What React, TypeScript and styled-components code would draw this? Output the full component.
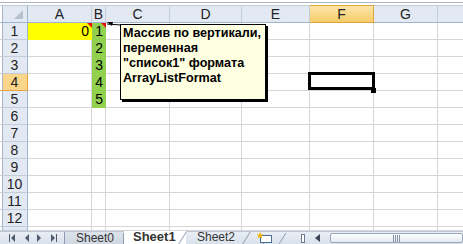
import styled, { createGlobalStyle, css } from 'styled-components';

// Estilo global
const GlobalStyle = createGlobalStyle`
  html, body {
    margin: 0;
    padding: 0;
    background: #fff;
    overflow: hidden;
  }
  body {
    font-family: "Liberation Sans", Arial, sans-serif;
  }
`;

const Page = styled.div`
  position: relative;
  width: 463px;
  height: 244px;
  overflow: hidden;
  display: flex;
  flex-direction: column;
  background: #fff;
`;

const TopStrip = styled.div`
  height: 5px;
  flex: none;
  background: linear-gradient(to bottom, #fff 2px, #aeb7c3 2px, #aeb7c3 3px, #fff 3px);
`;

const Sheet = styled.div`
  flex: none;
  display: grid;
  grid-template-columns: 28px 64px 14px 64px 72px 68px 64px 64px 64px;
  grid-template-rows: 18px repeat(12, 17px) 4px;
`;

const Corner = styled.div`
  position: relative;
  box-sizing: border-box;
  border-top: 1px solid #c3ccd8;
  border-right: 1px solid #9eb6ce;
  border-bottom: 1px solid #9eb6ce;
  background: linear-gradient(to right, #fff 2px, #aab5c3 2px, #aab5c3 3px, #e3e9f2 3px);

  &::after {
    content: '';
    position: absolute;
    right: 4px;
    bottom: 3px;
    border-style: solid;
    border-width: 0 0 9px 9px;
    border-color: transparent transparent #b8c2ce transparent;
  }
`;

const ColHeader = styled.div<{ $active?: boolean }>`
  box-sizing: border-box;
  border-top: 1px solid #c3ccd8;
  border-right: 1px solid #c3ccd8;
  border-bottom: 1px solid #9eb6ce;
  background: #e3e9f2;
  color: #222;
  font-size: 14px;
  line-height: 16px;
  text-align: center;

  ${p => p.$active && css`
    background: linear-gradient(to bottom, #fce7a8, #f6cb6a);
    border-color: #e1a33f;
    border-top-color: #e1a33f;
  `}
`;

const RowHeader = styled.div<{ $active?: boolean }>`
  box-sizing: border-box;
  border-right: 1px solid #9eb6ce;
  border-bottom: 1px solid #c3ccd8;
  background: linear-gradient(to right, #fff 2px, #aab5c3 2px, #aab5c3 3px, #e3e9f2 3px);
  color: #222;
  font-size: 14px;
  line-height: 16px;
  text-align: center;
  padding-left: 2px;

  ${p => p.$active && css`
    background: linear-gradient(to right, #fff 2px, #aab5c3 2px, #aab5c3 3px, #f9d68a 3px);
    border-bottom-color: #e6a540;
    border-right-color: #e6a540;
  `}
`;

const Cell = styled.div<{ $fill?: string; $note?: boolean; $selected?: boolean }>`
  position: relative;
  box-sizing: border-box;
  border-right: 1px solid ${p => p.$fill ?? '#d6d6d6'};
  border-bottom: 1px solid ${p => p.$fill ?? '#d6d6d6'};
  background: ${p => p.$fill ?? '#fff'};
  color: #000;
  font-size: 14px;
  line-height: 16px;
  text-align: right;
  padding-right: 2px;

  ${p => p.$note && css`
    &::after {
      content: '';
      position: absolute;
      top: 0;
      right: -1px;
      border-style: solid;
      border-width: 0 5px 5px 0;
      border-color: transparent #e8100f transparent transparent;
    }
  `}

  ${p => p.$selected && css`
    &::before {
      content: '';
      position: absolute;
      left: -2px;
      top: -2px;
      right: -2px;
      bottom: 0;
      border: 3px solid #000;
      box-sizing: border-box;
      z-index: 2;
    }
    &::after {
      content: '';
      position: absolute;
      right: -3px;
      bottom: -3px;
      width: 5px;
      height: 5px;
      background: #000;
      z-index: 3;
    }
  `}
`;

// Comentário
const Comment = styled.div`
  position: absolute;
  left: 120px;
  top: 24px;
  width: 146px;
  height: 76px;
  box-sizing: border-box;
  border: 1px solid #000;
  background: #ffffe1;
  box-shadow: 2px 2px 0 #000;
  padding: 1px 0 0 2px;
  z-index: 5;
`;

const CommentLine = styled.div`
  font-family: "Liberation Sans", Arial, sans-serif;
  font-weight: 700;
  font-size: 12.6px;
  line-height: 15px;
  color: #000;
  white-space: nowrap;
`;

const Arrow = styled.svg`
  position: absolute;
  left: 104px;
  top: 21px;
  z-index: 6;
`;

// Barra de abas
const TabBar = styled.div`
  flex: 1;
  display: flex;
  align-items: stretch;
  background: linear-gradient(to bottom, #e9eef5, #d9e1eb);
  border-top: 1px solid #bcc6d3;
  box-sizing: border-box;
`;

const NavGroup = styled.div`
  width: 64px;
  flex: none;
  display: flex;
  align-items: center;
  justify-content: space-around;
  padding: 0 4px 0 6px;
  box-sizing: border-box;
`;

const Tab = styled.div<{ $active?: boolean; $width: number }>`
  position: relative;
  flex: none;
  width: ${p => p.$width}px;
  box-sizing: border-box;
  font-size: ${p => (p.$active ? 13 : 12)}px;
  font-weight: ${p => (p.$active ? 700 : 400)};
  line-height: 12px;
  color: #333;
  padding-left: ${p => (p.$active ? 9 : 11)}px;
  background: ${p => (p.$active ? '#fff' : 'transparent')};
  margin-top: -1px;

  &::after {
    content: '';
    position: absolute;
    right: 3px;
    top: 1px;
    bottom: 0;
    width: 1px;
    background: #8d9bb0;
    transform: skewX(-32deg);
  }
`;

const FirstTab = styled(Tab)`
  background: linear-gradient(to bottom, #dde3eb, #cfd7e2);
  border-left: 1px solid #8d9bb0;
  margin-top: 0;
  &::after {
    right: 0;
    transform: none;
  }
`;

const NewTab = styled.div`
  flex: none;
  width: 36px;
  position: relative;
  display: flex;
  align-items: center;
  padding-left: 6px;
  box-sizing: border-box;

  &::after {
    content: '';
    position: absolute;
    right: 3px;
    top: 1px;
    bottom: 0;
    width: 1px;
    background: #8d9bb0;
    transform: skewX(-32deg);
  }
`;

const Spacer = styled.div`
  flex: 1;
`;

const Splitter = styled.div`
  flex: none;
  width: 4px;
  margin: 2px 10px 1px 0;
  border: 1px solid #6d7b8f;
  background: #fff;
  box-sizing: border-box;
`;

const ScrollArrow = styled.div`
  flex: none;
  width: 12px;
  display: flex;
  align-items: center;
`;

const Thumb = styled.div`
  flex: none;
  width: 131px;
  margin: 1px 0 1px 3px;
  border: 1px solid #99a7ba;
  border-radius: 2px;
  background: linear-gradient(to bottom, #fcfdfe, #e4eaf2);
  display: flex;
  align-items: center;
  justify-content: center;
`;

const Grip = styled.div`
  width: 7px;
  height: 7px;
  background: repeating-linear-gradient(to right, #8a96a8 0 1px, transparent 1px 2px);
`;

// A coluna H fica quase toda fora da janela, por isso o cabeçalho dela fica sem letra
const columns = ['A', 'B', 'C', 'D', 'E', 'F', 'G', 'H'];
const visibleLabels = ['A', 'B', 'C', 'D', 'E', 'F', 'G'];

const cellData: Record<string, { value?: string; fill?: string; note?: boolean }> = {
  A1: { value: '0', fill: '#ffff00', note: true },
  B1: { value: '1', fill: '#92d050', note: true },
  B2: { value: '2', fill: '#92d050' },
  B3: { value: '3', fill: '#92d050' },
  B4: { value: '4', fill: '#92d050' },
  B5: { value: '5', fill: '#92d050' },
};

const commentLines = ['Массив по вертикали,', 'переменная', '"список1" формата', 'ArrayListFormat'];

function NavIcon({ kind }: { kind: 'first' | 'prev' | 'next' | 'last' }) {
  const fill = '#4f5b6b';
  return (
    <svg width="7" height="8" viewBox="0 0 7 8">
      {kind === 'first' && <rect x="0" y="0" width="1" height="8" fill={fill} />}
      {(kind === 'first' || kind === 'prev') && <polygon points="6,0 6,8 2,4" fill={fill} />}
      {(kind === 'next' || kind === 'last') && <polygon points="1,0 1,8 5,4" fill={fill} />}
      {kind === 'last' && <rect x="6" y="0" width="1" height="8" fill={fill} />}
    </svg>
  );
}

function NewSheetIcon() {
  return (
    <svg width="18" height="12" viewBox="0 0 18 12">
      <rect x="4.5" y="3.5" width="11" height="7" fill="#fff" stroke="#4a6c9b" />
      <path d="M6 10.5 L8 12 L8 10.5" fill="#4a6c9b" />
      <polygon points="4,0 5,2.5 7.5,2.5 5.5,4 6.5,6.5 4,5 1.5,6.5 2.5,4 0.5,2.5 3,2.5" fill="#f5b300" />
    </svg>
  );
}

export default function App() {
  const rows = Array.from({ length: 13 }, (_, i) => i + 1);

  return (
    <Page>
      <GlobalStyle />
      <TopStrip />
      <Sheet>
        <Corner />
        {columns.map(col => (
          <ColHeader key={col} $active={col === 'F'}>{visibleLabels.includes(col) ? col : ''}</ColHeader>
        ))}
        {rows.map(row => (
          <>
            <RowHeader key={`r${row}`} $active={row === 4}>{row <= 12 ? row : ''}</RowHeader>
            {columns.map(col => {
              const data = cellData[`${col}${row}`];
              return (
                <Cell
                  key={`${col}${row}`}
                  $fill={data?.fill}
                  $note={data?.note}
                  $selected={col === 'F' && row === 4}
                >
                  {data?.value}
                </Cell>
              );
            })}
          </>
        ))}
      </Sheet>

      <Arrow width="18" height="8" viewBox="0 0 18 8">
        <line x1="3" y1="3" x2="17" y2="4" stroke="#000" strokeWidth="1" />
        <polygon points="3,1 9,1 8,5" fill="#000" />
      </Arrow>

      <Comment>
        {commentLines.map(line => (
          <CommentLine key={line}>{line}</CommentLine>
        ))}
      </Comment>

      <TabBar>
        <NavGroup>
          <NavIcon kind="first" />
          <NavIcon kind="prev" />
          <NavIcon kind="next" />
          <NavIcon kind="last" />
        </NavGroup>
        <FirstTab $width={60}>Sheet0</FirstTab>
        <Tab $active $width={62}>Sheet1</Tab>
        <Tab $width={64}>Sheet2</Tab>
        <NewTab><NewSheetIcon /></NewTab>
        <Spacer />
        <Splitter />
        <ScrollArrow>
          <svg width="5" height="8" viewBox="0 0 5 8"><polygon points="5,0 5,8 0,4" fill="#3c4654" /></svg>
        </ScrollArrow>
        <Thumb><Grip /></Thumb>
      </TabBar>
    </Page>
  );
}
